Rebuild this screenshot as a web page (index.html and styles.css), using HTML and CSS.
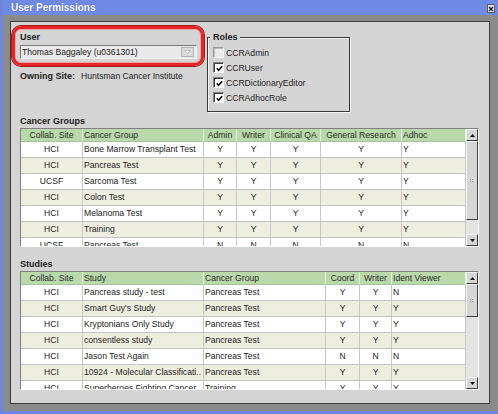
FILE: index.html
```html
<!DOCTYPE html>
<html>
<head>
<meta charset="utf-8">
<title>User Permissions</title>
<link rel="stylesheet" href="styles.css">
</head>
<body>
<div class="window">
  <div class="titlebar">
    <span class="title">User Permissions</span>
    <span class="close"><svg width="6" height="6" viewBox="0 0 6 6"><path d="M1 1 L5 5 M5 1 L1 5" stroke="#111" stroke-width="1.2"/></svg></span>
  </div>
  <div class="frame">
    <div class="panel">
      <div class="top">
        <div class="user-col">
          <div class="user-box">
            <div class="label">User</div>
            <div class="combo">
              <span class="combo-text">Thomas Baggaley (u0361301)</span>
              <span class="combo-btn"><svg width="7" height="4" viewBox="0 0 7 4"><path d="M0.5 0.5 L6.5 0.5 L3.5 3.5 Z" fill="#fff" stroke="#a8a8a8" stroke-width="0.6"/></svg></span>
            </div>
          </div>
          <div class="owning"><b>Owning Site:</b><span class="site">Huntsman Cancer Institute</span></div>
        </div>
        <div class="roles">
          <div class="roles-title">Roles</div>
          <div class="role"><span class="cb off"></span><span>CCRAdmin</span></div>
          <div class="role"><span class="cb"><svg width="7" height="7" viewBox="0 0 7 7"><path d="M0.8 3.3 L2.6 5.3 L6.2 1.2" fill="none" stroke="#000" stroke-width="1.5"/></svg></span><span>CCRUser</span></div>
          <div class="role"><span class="cb"><svg width="7" height="7" viewBox="0 0 7 7"><path d="M0.8 3.3 L2.6 5.3 L6.2 1.2" fill="none" stroke="#000" stroke-width="1.5"/></svg></span><span>CCRDictionaryEditor</span></div>
          <div class="role"><span class="cb"><svg width="7" height="7" viewBox="0 0 7 7"><path d="M0.8 3.3 L2.6 5.3 L6.2 1.2" fill="none" stroke="#000" stroke-width="1.5"/></svg></span><span>CCRAdhocRole</span></div>
        </div>
      </div>

      <div class="section-label">Cancer Groups</div>
      <div class="grid-box">
        <div class="grid cg">
          <div class="row head">
            <div class="c">Collab. Site</div><div>Cancer Group</div><div class="c">Admin</div><div class="c">Writer</div><div class="c">Clinical QA</div><div class="c">General Research</div><div>Adhoc</div>
          </div>
          <div class="body">
            <div class="row"><div class="c">HCI</div><div>Bone Marrow Transplant Test</div><div class="c">Y</div><div class="c">Y</div><div class="c">Y</div><div class="c">Y</div><div>Y</div></div>
            <div class="row"><div class="c">HCI</div><div>Pancreas Test</div><div class="c">Y</div><div class="c">Y</div><div class="c">Y</div><div class="c">Y</div><div>Y</div></div>
            <div class="row"><div class="c">UCSF</div><div>Sarcoma Test</div><div class="c">Y</div><div class="c">Y</div><div class="c">Y</div><div class="c">Y</div><div>Y</div></div>
            <div class="row"><div class="c">HCI</div><div>Colon Test</div><div class="c">Y</div><div class="c">Y</div><div class="c">Y</div><div class="c">Y</div><div>Y</div></div>
            <div class="row"><div class="c">HCI</div><div>Melanoma Test</div><div class="c">Y</div><div class="c">Y</div><div class="c">Y</div><div class="c">Y</div><div>Y</div></div>
            <div class="row"><div class="c">HCI</div><div>Training</div><div class="c">Y</div><div class="c">Y</div><div class="c">Y</div><div class="c">Y</div><div>Y</div></div>
            <div class="row"><div class="c">UCSF</div><div>Pancreas Test</div><div class="c">N</div><div class="c">N</div><div class="c">N</div><div class="c">N</div><div>N</div></div>
          </div>
        </div>
        <div class="scroll">
          <div class="sb-btn"><svg width="5" height="3" viewBox="0 0 5 3"><path d="M0 3 L2.5 0 L5 3 Z" fill="#111"/></svg></div>
          <div class="sb-thumb cg-thumb"><svg width="4" height="4" viewBox="0 0 4 4"><g fill="#9a9a9a"><rect x="0" y="0" width="1" height="1"/><rect x="2" y="0" width="1" height="1"/><rect x="0" y="2" width="1" height="1"/><rect x="2" y="2" width="1" height="1"/></g></svg></div>
          <div class="sb-track"></div>
          <div class="sb-btn"><svg width="5" height="3" viewBox="0 0 5 3"><path d="M0 0 L5 0 L2.5 3 Z" fill="#111"/></svg></div>
        </div>
      </div>

      <div class="section-label studies">Studies</div>
      <div class="grid-box">
        <div class="grid st">
          <div class="row head">
            <div class="c">Collab. Site</div><div>Study</div><div>Cancer Group</div><div class="c">Coord</div><div class="c">Writer</div><div>Ident Viewer</div>
          </div>
          <div class="body">
            <div class="row"><div class="c">HCI</div><div>Pancreas study - test</div><div>Pancreas Test</div><div class="c">Y</div><div class="c">Y</div><div>N</div></div>
            <div class="row"><div class="c">HCI</div><div>Smart Guy's Study</div><div>Pancreas Test</div><div class="c">Y</div><div class="c">Y</div><div>Y</div></div>
            <div class="row"><div class="c">HCI</div><div>Kryptonians Only Study</div><div>Pancreas Test</div><div class="c">Y</div><div class="c">Y</div><div>Y</div></div>
            <div class="row"><div class="c">HCI</div><div>consentless study</div><div>Pancreas Test</div><div class="c">Y</div><div class="c">Y</div><div>Y</div></div>
            <div class="row"><div class="c">HCI</div><div>Jason Test Again</div><div>Pancreas Test</div><div class="c">N</div><div class="c">N</div><div>N</div></div>
            <div class="row"><div class="c">HCI</div><div>10924 - Molecular Classificati..</div><div>Pancreas Test</div><div class="c">Y</div><div class="c">Y</div><div>Y</div></div>
            <div class="row"><div class="c">HCI</div><div>Superheroes Fighting Cancer</div><div>Training</div><div class="c">Y</div><div class="c">Y</div><div>Y</div></div>
          </div>
        </div>
        <div class="scroll">
          <div class="sb-btn"><svg width="5" height="3" viewBox="0 0 5 3"><path d="M0 3 L2.5 0 L5 3 Z" fill="#111"/></svg></div>
          <div class="sb-thumb st-thumb"><svg width="4" height="4" viewBox="0 0 4 4"><g fill="#9a9a9a"><rect x="0" y="0" width="1" height="1"/><rect x="2" y="0" width="1" height="1"/><rect x="0" y="2" width="1" height="1"/><rect x="2" y="2" width="1" height="1"/></g></svg></div>
          <div class="sb-track"></div>
          <div class="sb-btn"><svg width="5" height="3" viewBox="0 0 5 3"><path d="M0 0 L5 0 L2.5 3 Z" fill="#111"/></svg></div>
        </div>
      </div>
    </div>
  </div>
</div>
</body>
</html>
```

FILE: styles.css
```css
* { box-sizing: border-box; }
html, body { margin: 0; padding: 0; }
body {
  width: 498px;
  height: 414px;
  overflow: hidden;
  background: #8a8a8a;
  font-family: "Liberation Sans", Arial, sans-serif;
  font-size: 8.6px;
  color: #1c1c1c;
}
.window {
  height: 414px;
  display: flex;
  flex-direction: column;
  border-left: 3px solid #6e85dc;
  border-bottom: 3px solid #6e85dc;
  background: #8a8a8a;
}
.titlebar {
  height: 15px;
  flex: none;
  background: #6f8ae4;
  display: flex;
  align-items: center;
  justify-content: space-between;
  padding: 0 3px 0 8px;
}
.title {
  color: #fff;
  font-weight: bold;
  font-size: 10px;
  line-height: 15px;
  text-shadow: 0 0 1px #3d4f95;
}
.close {
  width: 8px;
  height: 9px;
  margin-top: 2px;
  background: #e2e2e2;
  border: 1px solid #5a5a5a;
  display: flex;
  align-items: center;
  justify-content: center;
}
.frame {
  flex: 1;
  min-height: 0;
  padding: 6px 8px 7px 7px;
}
.panel {
  height: 100%;
  background: #d4d4d4;
  border: 1px solid #3c3c3c;
}
.top {
  display: flex;
  height: 91px;
}
.user-col {
  margin-left: 1px;
  width: 192px;
}
.user-box {
  margin-top: 4px;
  height: 40px;
  border: 3px solid #e4262b;
  border-radius: 9px;
  box-shadow: 0 0 0 1px #a51a1e, inset 0 0 0 1px #f3a3a3;
  padding: 3px 0 0 5px;
}
.label {
  font-weight: bold;
  font-size: 9px;
  line-height: 11px;
}
.combo {
  margin-top: 2px;
  width: 177px;
  height: 14px;
  background: #e9e9e9;
  border: 1px solid;
  border-color: #7a7a7a #f4f4f4 #f4f4f4 #7a7a7a;
  display: flex;
  align-items: center;
  justify-content: space-between;
  padding: 0 2px 0 1px;
  line-height: 12px;
}
.combo-btn {
  width: 13px;
  height: 10px;
  background: #dadada;
  border: 1px solid #b4b4b4;
  display: flex;
  align-items: center;
  justify-content: center;
}
.owning {
  margin-top: 5px;
  padding-left: 8px;
  line-height: 11px;
}
.owning b { font-size: 9px; }
.owning .site { margin-left: 6px; }
.roles {
  margin-left: 3px;
  margin-top: 15px;
  width: 143px;
  height: 75px;
  border: 1px solid #3a3a3a;
  box-shadow: 1px 1px 0 #f4f4f4, inset 1px 1px 0 #f4f4f4;
  padding-left: 5px;
}
.roles-title {
  display: block;
  width: fit-content;
  margin: -7px 0 2px -3px;
  padding: 0 2px 0 3px;
  background: #d4d4d4;
  font-weight: bold;
  font-size: 9px;
  line-height: 12px;
}
.role {
  display: flex;
  align-items: center;
  gap: 2px;
  height: 15px;
}
.cb {
  width: 11px;
  height: 11px;
  background: #fff;
  border: 1px solid;
  border-color: #808080 #fafafa #fafafa #808080;
  box-shadow: inset 1px 1px 0 #404040;
  display: flex;
  align-items: center;
  justify-content: center;
  padding: 1px 0 0 1px;
}
.cb.off {
  background: #ebebeb;
  border-color: #9a9a9a #f4f4f4 #f4f4f4 #9a9a9a;
  box-shadow: inset 1px 1px 0 #bdbdbd;
}
.section-label {
  height: 15px;
  padding: 3px 0 0 9px;
  font-weight: bold;
  font-size: 9px;
  line-height: 11px;
}
.section-label.studies { margin-top: 9px; }
.grid-box {
  margin-left: 9px;
  width: 459px;
  height: 119px;
  border: 1px solid;
  border-color: #808080 #fdfdfd #fdfdfd #808080;
  display: flex;
  background: #fff;
}
.grid { width: 445px; flex: none; }
.row { display: grid; height: 16px; }
.cg .row { grid-template-columns: 62px 121px 33px 34px 50px 81px 64px; }
.st .row { grid-template-columns: 62px 121px 122px 34px 32px 74px; }
.row > div {
  border-right: 1px solid #c8c8c8;
  border-bottom: 1px solid #c2c2c2;
  padding: 0 1px;
  line-height: 15px;
  white-space: nowrap;
  overflow: hidden;
}
.row > .c { text-align: center; }
.row.head {
  height: 13px;
  background: #b9d9aa;
  color: #2a2a2a;
}
.row.head > div {
  line-height: 12px;
  border-right: 1px solid #e6f0e0;
  border-bottom: 1px solid #a8c49c;
}
.body {
  height: 104px;
  overflow: hidden;
}
.body .row:nth-child(even) { background: #eeeee0; }
.scroll {
  width: 12px;
  flex: none;
  display: flex;
  flex-direction: column;
  background: #e3e3e3;
}
.sb-btn, .sb-thumb {
  flex: none;
  background: #d6d6d6;
  border: 1px solid;
  border-color: #f6f6f6 #3e3e3e #3e3e3e #f6f6f6;
  display: flex;
  align-items: center;
  justify-content: center;
}
.sb-btn { height: 12px; }
.cg-thumb { height: 79px; }
.st-thumb { height: 33px; }
.sb-track { flex: 1; }
```
